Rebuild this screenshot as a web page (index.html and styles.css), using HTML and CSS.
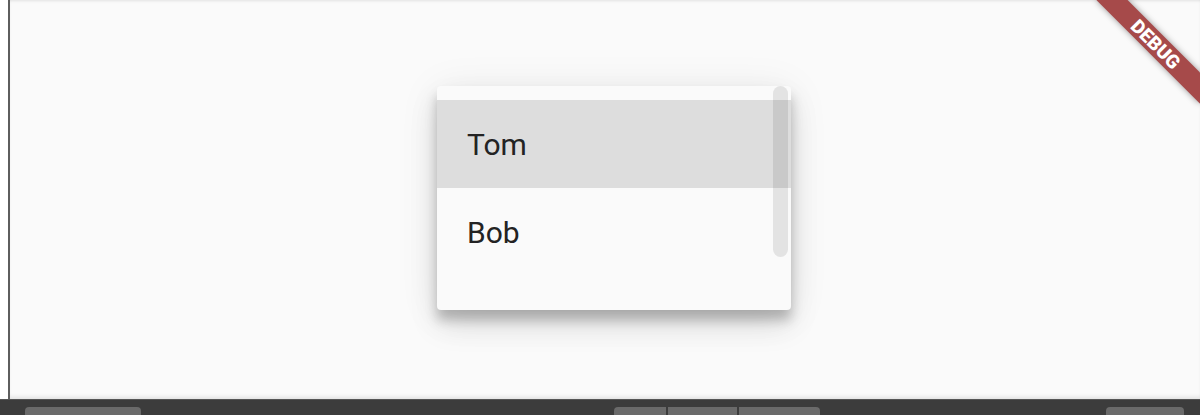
FILE: index.html
```html
<!DOCTYPE html>
<html>
<head>
<meta charset="utf-8">
<link rel="stylesheet" href="styles.css">
</head>
<body>
  <div class="app">
    <div class="stage">
      <div class="menu">
        <div class="list">
          <div class="item selected">Tom</div>
          <div class="item">Bob</div>
          <div class="item"></div>
        </div>
        <div class="thumb"></div>
      </div>
      <div class="banner"><span>DEBUG</span></div>
    </div>
  </div>
  <div class="toolbar">
    <div class="btn btn-left"></div>
    <div class="group">
      <div class="btn seg seg-first"></div>
      <div class="btn seg seg-mid"></div>
      <div class="btn seg seg-last"></div>
    </div>
    <div class="btn btn-right"></div>
  </div>
</body>
</html>
```

FILE: styles.css
```css
html, body {
  margin: 0;
  padding: 0;
  width: 1200px;
  height: 415px;
  overflow: hidden;
  background: #ffffff;
  font-family: Roboto, "Noto Sans", "Liberation Sans", sans-serif;
}

.app {
  height: 399px;
  padding-left: 8px;
  display: flex;
}

.stage {
  position: relative;
  flex: 1;
  border-left: 2px solid #5e5e5e;
  background: #fafafa;
  overflow: hidden;
  box-shadow: inset 0 3px 3px -2px rgba(0, 0, 0, 0.10),
              inset 0 -4px 4px -2px rgba(0, 0, 0, 0.10);
  display: flex;
  align-items: flex-start;
  padding: 86px 0 0 427px;
  box-sizing: border-box;
}

.menu {
  position: relative;
  width: 354px;
  height: 224px;
  background: #fafafa;
  border-radius: 4px;
  overflow: hidden;
  box-shadow: 0 10px 12px rgba(0, 0, 0, 0.22),
              0 16px 30px rgba(0, 0, 0, 0.10),
              0 4px 40px rgba(0, 0, 0, 0.08);
}

.list {
  padding-top: 14px;
  display: flex;
  flex-direction: column;
}

.item {
  height: 88px;
  display: flex;
  align-items: center;
  padding-left: 30px;
  font-size: 30px;
  color: #232323;
}

.item.selected {
  background: #dddddd;
}

.thumb {
  position: absolute;
  top: 0;
  right: 3px;
  width: 15px;
  height: 171px;
  border-radius: 8px;
  background: rgba(0, 0, 0, 0.09);
}

.banner {
  position: absolute;
  top: 33px;
  right: -29px;
  width: 146px;
  height: 22px;
  background: #a64a4a;
  transform: rotate(45deg);
  box-shadow: 0 0 6px rgba(0, 0, 0, 0.4);
  display: flex;
  align-items: center;
  justify-content: center;
}

.banner span {
  color: #ffffff;
  font-size: 19px;
  font-weight: 900;
  line-height: 1;
}

.toolbar {
  height: 16px;
  background: #3c3c3c;
  border-top: 1px solid #555555;
  box-sizing: border-box;
  display: flex;
  align-items: flex-start;
  padding-top: 7px;
  overflow: hidden;
}

.btn {
  height: 8px;
  background: #6a6a6a;
  border-radius: 4px 4px 0 0;
}

.btn-left {
  margin-left: 25px;
  width: 116px;
}

.group {
  margin-left: 473px;
  display: flex;
  gap: 2px;
}

.seg {
  border-radius: 0;
}

.seg-first {
  width: 52px;
  border-top-left-radius: 4px;
}

.seg-mid {
  width: 69px;
}

.seg-last {
  width: 81px;
  border-top-right-radius: 4px;
}

.btn-right {
  margin-left: 286px;
  width: 78px;
}
```
